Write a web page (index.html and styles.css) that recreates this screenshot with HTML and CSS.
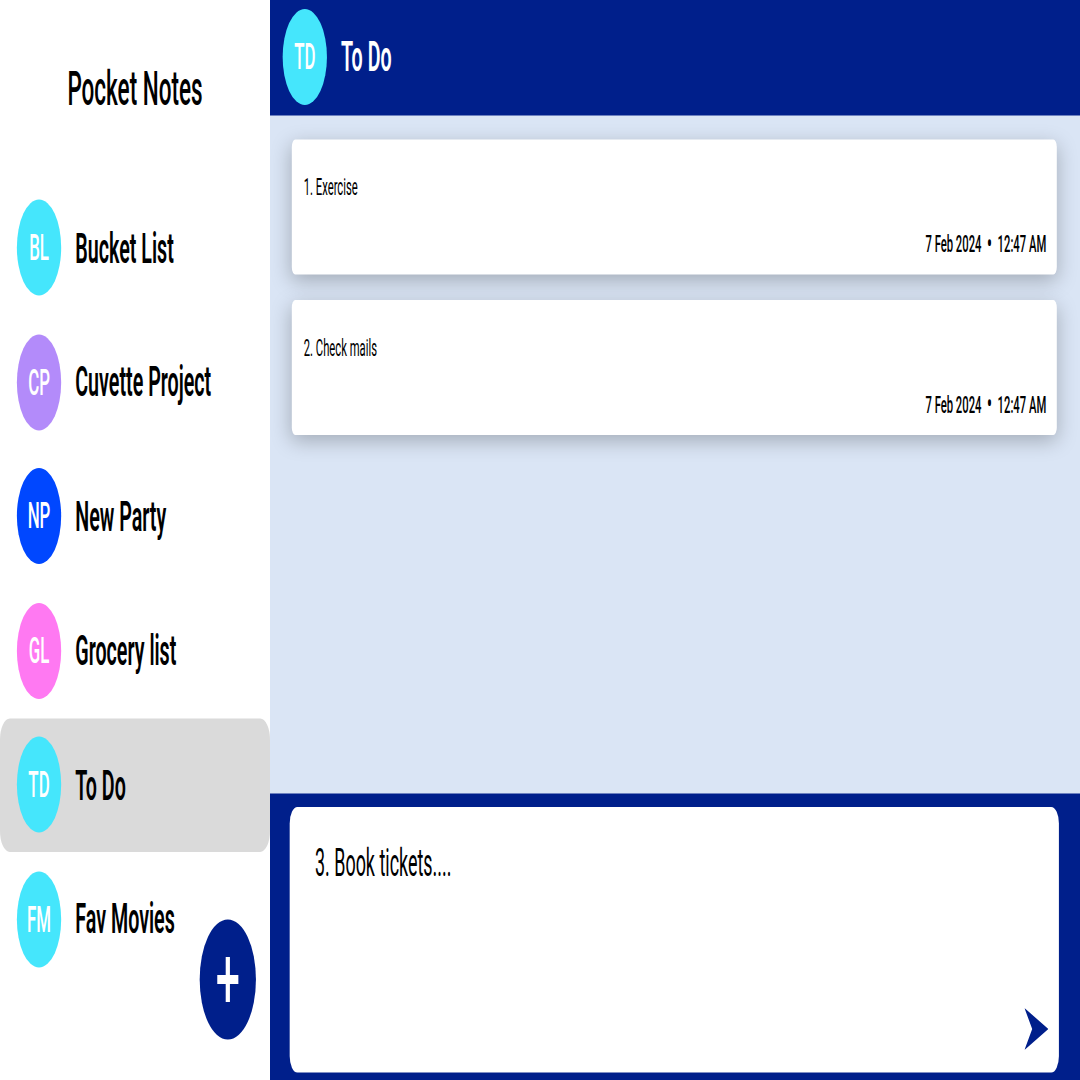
FILE: index.html
```html
<!DOCTYPE html>
<html lang="en">
<head>
<meta charset="utf-8">
<title>Pocket Notes</title>
<link rel="stylesheet" href="styles.css">
</head>
<body>
<div class="frame">
<div class="stage">
  <aside class="sidebar">
    <h1 class="brand">Pocket Notes</h1>
    <ul class="groups">
      <li class="group"><span class="avatar c-cyan">BL</span><span class="group-name">Bucket List</span></li>
      <li class="group"><span class="avatar c-purple">CP</span><span class="group-name">Cuvette Project</span></li>
      <li class="group"><span class="avatar c-blue">NP</span><span class="group-name">New Party</span></li>
      <li class="group"><span class="avatar c-pink">GL</span><span class="group-name">Grocery list</span></li>
      <li class="group active"><span class="avatar c-cyan">TD</span><span class="group-name">To Do</span></li>
      <li class="group"><span class="avatar c-cyan">FM</span><span class="group-name">Fav Movies</span></li>
    </ul>
    <button class="fab" aria-label="Add group">
      <svg viewBox="0 0 32 32" width="32" height="32"><path d="M13 1h6v12h12v6H19v12h-6V19H1v-6h12z" fill="#fff"/></svg>
    </button>
  </aside>
  <main class="main">
    <header class="topbar">
      <span class="avatar c-cyan">TD</span>
      <span class="topbar-name">To Do</span>
    </header>
    <section class="notes">
      <article class="note">
        <p class="note-text">1. Exercise</p>
        <div class="note-meta"><span>7 Feb 2024</span><span class="dot">&bull;</span><span>12:47 AM</span></div>
      </article>
      <article class="note">
        <p class="note-text">2. Check mails</p>
        <div class="note-meta"><span>7 Feb 2024</span><span class="dot">&bull;</span><span>12:47 AM</span></div>
      </article>
    </section>
    <footer class="composer">
      <div class="input">
        <p class="input-text">3. Book tickets....</p>
        <button class="send" aria-label="Send">
          <svg viewBox="0 0 34 28" width="34" height="28"><path d="M0 0L34 14L0 28L11 14Z" fill="#001F8B"/></svg>
        </button>
      </div>
    </footer>
  </main>
</div>
</div>
</body>
</html>
```
FILE: styles.css
```css
* { box-sizing: border-box; }
html, body { margin: 0; padding: 0; background: #fff; }
body { font-family: Roboto, "Noto Sans", sans-serif; }

.frame {
  width: 1080px;
  height: 1080px;
  overflow: hidden;
}
.stage {
  width: 1536px;
  height: 720px;
  display: flex;
  transform: scale(0.703125, 1.5);
  transform-origin: 0 0;
}

.sidebar {
  position: relative;
  width: 384px;
  flex: none;
  background: #fff;
  display: flex;
  flex-direction: column;
}
.brand {
  margin: 0;
  height: 120.5px;
  padding-bottom: 2px;
  display: flex;
  align-items: center;
  justify-content: center;
  font-size: 32px;
  font-weight: 500;
  color: #000;
}
.groups { list-style: none; margin: 0; padding: 0; }
.group {
  height: 89.5px;
  display: flex;
  align-items: center;
  gap: 20px;
  padding-left: 24px;
  border-radius: 14px;
}
.group.active { background: #dadada; }
.group-name { font-size: 28px; font-weight: 600; color: #000; }

.avatar {
  width: 63px;
  height: 64px;
  border-radius: 50%;
  flex: none;
  display: flex;
  align-items: center;
  justify-content: center;
  color: #fff;
  font-size: 24px;
  font-weight: 500;
}
.c-cyan { background: #45e6fc; }
.c-purple { background: #b38bfa; }
.c-blue { background: #0047ff; }
.c-pink { background: #ff79f2; }

.fab {
  position: absolute;
  right: 20px;
  bottom: 27px;
  width: 80px;
  height: 80px;
  border: 0;
  border-radius: 50%;
  background: #001f8b;
  display: flex;
  align-items: center;
  justify-content: center;
  padding: 0;
}

.main {
  flex: 1;
  display: flex;
  flex-direction: column;
  background: #dae5f5;
}
.topbar {
  height: 77px;
  background: #001f8b;
  display: flex;
  align-items: center;
  gap: 20px;
  padding-left: 18px;
  padding-bottom: 2px;
}
.topbar-name { color: #fff; font-size: 28px; font-weight: 600; }

.notes {
  flex: 1;
  display: flex;
  flex-direction: column;
  gap: 17px;
  padding: 16px 33px 0 31px;
}
.note {
  height: 90px;
  background: #fff;
  border-radius: 5px;
  box-shadow: 0 4px 20px rgba(0, 0, 0, 0.25);
  padding: 22px 15px 11px 17px;
  display: flex;
  flex-direction: column;
  justify-content: space-between;
}
.note-text { margin: 0; font-size: 16px; color: #000; }
.note-meta {
  display: flex;
  justify-content: flex-end;
  align-items: center;
  gap: 8px;
  font-size: 16px;
  font-weight: 500;
  color: #000;
}
.dot { font-size: 20px; line-height: 1; }

.composer {
  height: 191px;
  background: #001f8b;
  padding: 9px 30px 5px 28px;
  display: flex;
}
.input {
  flex: 1;
  background: #fff;
  border-radius: 11px;
  position: relative;
  padding: 22px 36px;
}
.input-text { margin: 0; font-size: 25.5px; color: #000; }
.send {
  position: absolute;
  right: 15px;
  bottom: 15px;
  border: 0;
  background: none;
  padding: 0;
  width: 34px;
  height: 28px;
}
.send svg { display: block; }
```
